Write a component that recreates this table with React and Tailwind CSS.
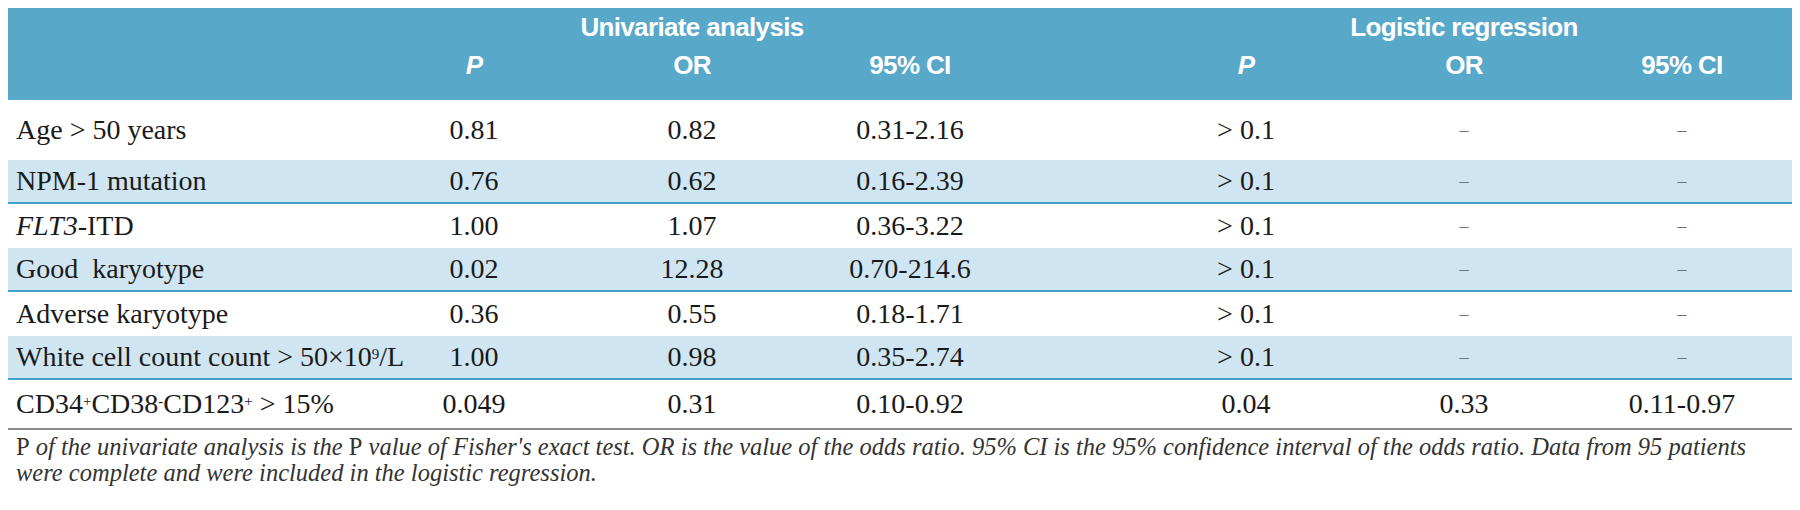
import React from 'react';

const COLS = 'grid grid-cols-[357px_218px_218px_218px_118px_218px_218px_218px]';

const ROWS = [
    { label: 'Age > 50 years', p: '0.81', or: '0.82', ci: '0.31-2.16', lp: '> 0.1', lor: '-', lci: '-', h: 'h-[60px]' },
    { label: 'NPM-1 mutation', p: '0.76', or: '0.62', ci: '0.16-2.39', lp: '> 0.1', lor: '-', lci: '-', shade: true },
    { label: <><i>FLT3</i>-ITD</>, p: '1.00', or: '1.07', ci: '0.36-3.22', lp: '> 0.1', lor: '-', lci: '-' },
    { label: 'Good\u00a0 karyotype', p: '0.02', or: '12.28', ci: '0.70-214.6', lp: '> 0.1', lor: '-', lci: '-', shade: true },
    { label: 'Adverse karyotype', p: '0.36', or: '0.55', ci: '0.18-1.71', lp: '> 0.1', lor: '-', lci: '-' },
    { label: <>White cell count count &gt; 50×10<sup className="text-[15px]">9</sup>/L</>, p: '1.00', or: '0.98', ci: '0.35-2.74', lp: '> 0.1', lor: '-', lci: '-', shade: true },
    {
        label: <>CD34<sup className="text-[15px]">+</sup>CD38<sup className="text-[15px]">-</sup>CD123<sup className="text-[15px]">+</sup> &gt; 15%</>,
        p: '0.049', or: '0.31', ci: '0.10-0.92', lp: '0.04', lor: '0.33', lci: '0.11-0.97', h: 'h-[48px]',
    },
];

function Cell({ value }) {
    if (value === '-') {
        return <div className="text-center text-[18px] text-gray-500">–</div>;
    }
    return <div className="text-center">{value}</div>;
}

export default function App() {
    return (
        <div className="w-[1800px] h-[510px] bg-white pt-[8px] px-[8px] font-['Liberation_Serif',serif] text-[#1a1a1a]">
            {/* Header */}
            <div className="bg-[#58a8c9] h-[92px] text-white font-['Liberation_Sans_Narrow','Liberation_Sans',sans-serif] font-bold text-[26px] tracking-tight">
                <div className={`${COLS} h-[22px] items-center`}>
                    <div className="col-start-2 col-span-3 text-center">Univariate analysis</div>
                    <div className="col-start-6 col-span-3 text-center">Logistic regression</div>
                </div>
                <div className={`${COLS} h-[70px] items-center`}>
                    <div />
                    <div className="text-center italic">P</div>
                    <div className="text-center">OR</div>
                    <div className="text-center">95% CI</div>
                    <div />
                    <div className="text-center italic">P</div>
                    <div className="text-center">OR</div>
                    <div className="text-center">95% CI</div>
                </div>
            </div>

            {/* Body rows */}
            {ROWS.map((r, i) => (
                <div
                    key={i}
                    className={`${COLS} items-center text-[28px] ${r.h || 'h-[44px]'} ${r.shade ? 'bg-[#d0e5f2] border-b-2 border-[#3ea2cb]' : ''}`}
                >
                    <div className="pl-[8px] whitespace-nowrap">{r.label}</div>
                    <Cell value={r.p} />
                    <Cell value={r.or} />
                    <Cell value={r.ci} />
                    <div />
                    <Cell value={r.lp} />
                    <Cell value={r.lor} />
                    <Cell value={r.lci} />
                </div>
            ))}

            {/* Footnote */}
            <div className="border-t-2 border-[#8c8c8c] pt-[4px] pl-[8px] text-[24.5px] leading-[26px] text-[#333] italic whitespace-nowrap">
                <div>
                    <span className="not-italic">P</span> of the univariate analysis is the <span className="not-italic">P</span> value of Fisher's exact test. OR is the value of the odds ratio. 95% CI is the 95% confidence interval of the odds ratio. Data from 95 patients
                </div>
                <div>were complete and were included in the logistic regression.</div>
            </div>
        </div>
    );
}
